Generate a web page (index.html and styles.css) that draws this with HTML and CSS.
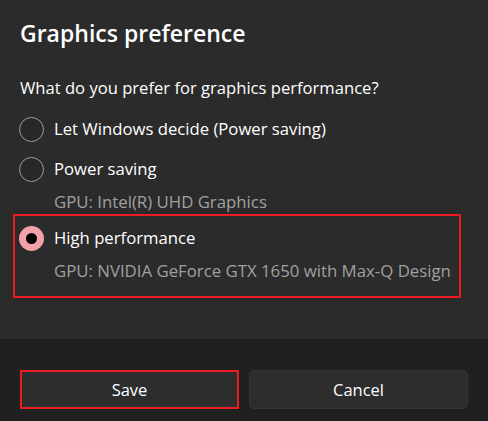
FILE: index.html
```html
<!DOCTYPE html>
<html lang="en">
<head>
<meta charset="utf-8">
<title>Graphics preference</title>
<link rel="stylesheet" href="styles.css">
</head>
<body>
<div class="dialog">
  <div class="content">
    <h1 class="title">Graphics preference</h1>
    <p class="question">What do you prefer for graphics performance?</p>
    <div class="options">
      <div class="option">
        <div class="row"><span class="radio"></span><span class="label">Let Windows decide (Power saving)</span></div>
      </div>
      <div class="option">
        <div class="row"><span class="radio"></span><span class="label">Power saving</span></div>
        <div class="sub">GPU: Intel(R) UHD Graphics</div>
      </div>
      <div class="option option-selected">
        <div class="row"><span class="radio radio-checked"></span><span class="label">High performance</span></div>
        <div class="sub">GPU: NVIDIA GeForce GTX 1650 with Max-Q Design</div>
      </div>
    </div>
  </div>
  <div class="footer">
    <button class="btn btn-marked">Save</button>
    <button class="btn">Cancel</button>
  </div>
</div>
</body>
</html>
```
FILE: styles.css
```css
html, body {
  margin: 0;
  padding: 0;
  background: #202020;
}
body {
  font-family: "Open Sans", "Noto Sans", sans-serif;
  color: #ffffff;
  width: 488px;
  height: 421px;
  overflow: hidden;
}
.dialog {
  display: flex;
  flex-direction: column;
  height: 421px;
}
.content {
  background: #2b2b2b;
  padding: 17px 20px 43px 20px;
}
.title {
  margin: 0;
  font-size: 23px;
  font-weight: 600;
  line-height: 32px;
  padding-left: 0;
}
.question {
  margin: 27px 0 9px 0;
  font-size: 16.6px;
  line-height: 24px;
}
.options {
  margin-left: -5px;
  width: 444px;
}
.option {
  padding-left: 4px;
}
.option-selected {
  margin-top: 2px;
  padding-top: 2px;
  padding-bottom: 13px;
  outline: 2px solid #ea1c24;
}
.row {
  display: flex;
  align-items: center;
  height: 40px;
}
.radio {
  box-sizing: border-box;
  width: 25px;
  height: 25px;
  border-radius: 50%;
  border: 1.5px solid #9c9c9c;
  background: #282828;
  margin-right: 10px;
  flex: none;
  display: flex;
  align-items: center;
  justify-content: center;
}
.radio-checked {
  border: none;
  background: #f3a1a9;
}
.radio-checked::after {
  content: "";
  width: 11px;
  height: 11px;
  border-radius: 50%;
  background: #000000;
}
.label {
  font-size: 16.7px;
  line-height: 24px;
}
.sub {
  margin-top: 1px;
  padding-left: 35px;
  font-size: 16.8px;
  line-height: 24px;
  color: #a0a0a0;
}
.footer {
  flex: 1;
  background: #202020;
  border-top: 1px solid #1c1c1c;
  padding: 30px 20px 0 20px;
  display: flex;
  gap: 10px;
  align-items: flex-start;
}
.btn {
  flex: 1;
  height: 39px;
  background: #2d2d2d;
  border: 1px solid #353535;
  border-radius: 5px;
  color: #ffffff;
  font-family: "Open Sans", "Noto Sans", sans-serif;
  font-size: 16.5px;
  padding: 0;
}
.btn-marked {
  border-radius: 0;
  outline: 2px solid #ea1c24;
  outline-offset: -2px;
}
```
